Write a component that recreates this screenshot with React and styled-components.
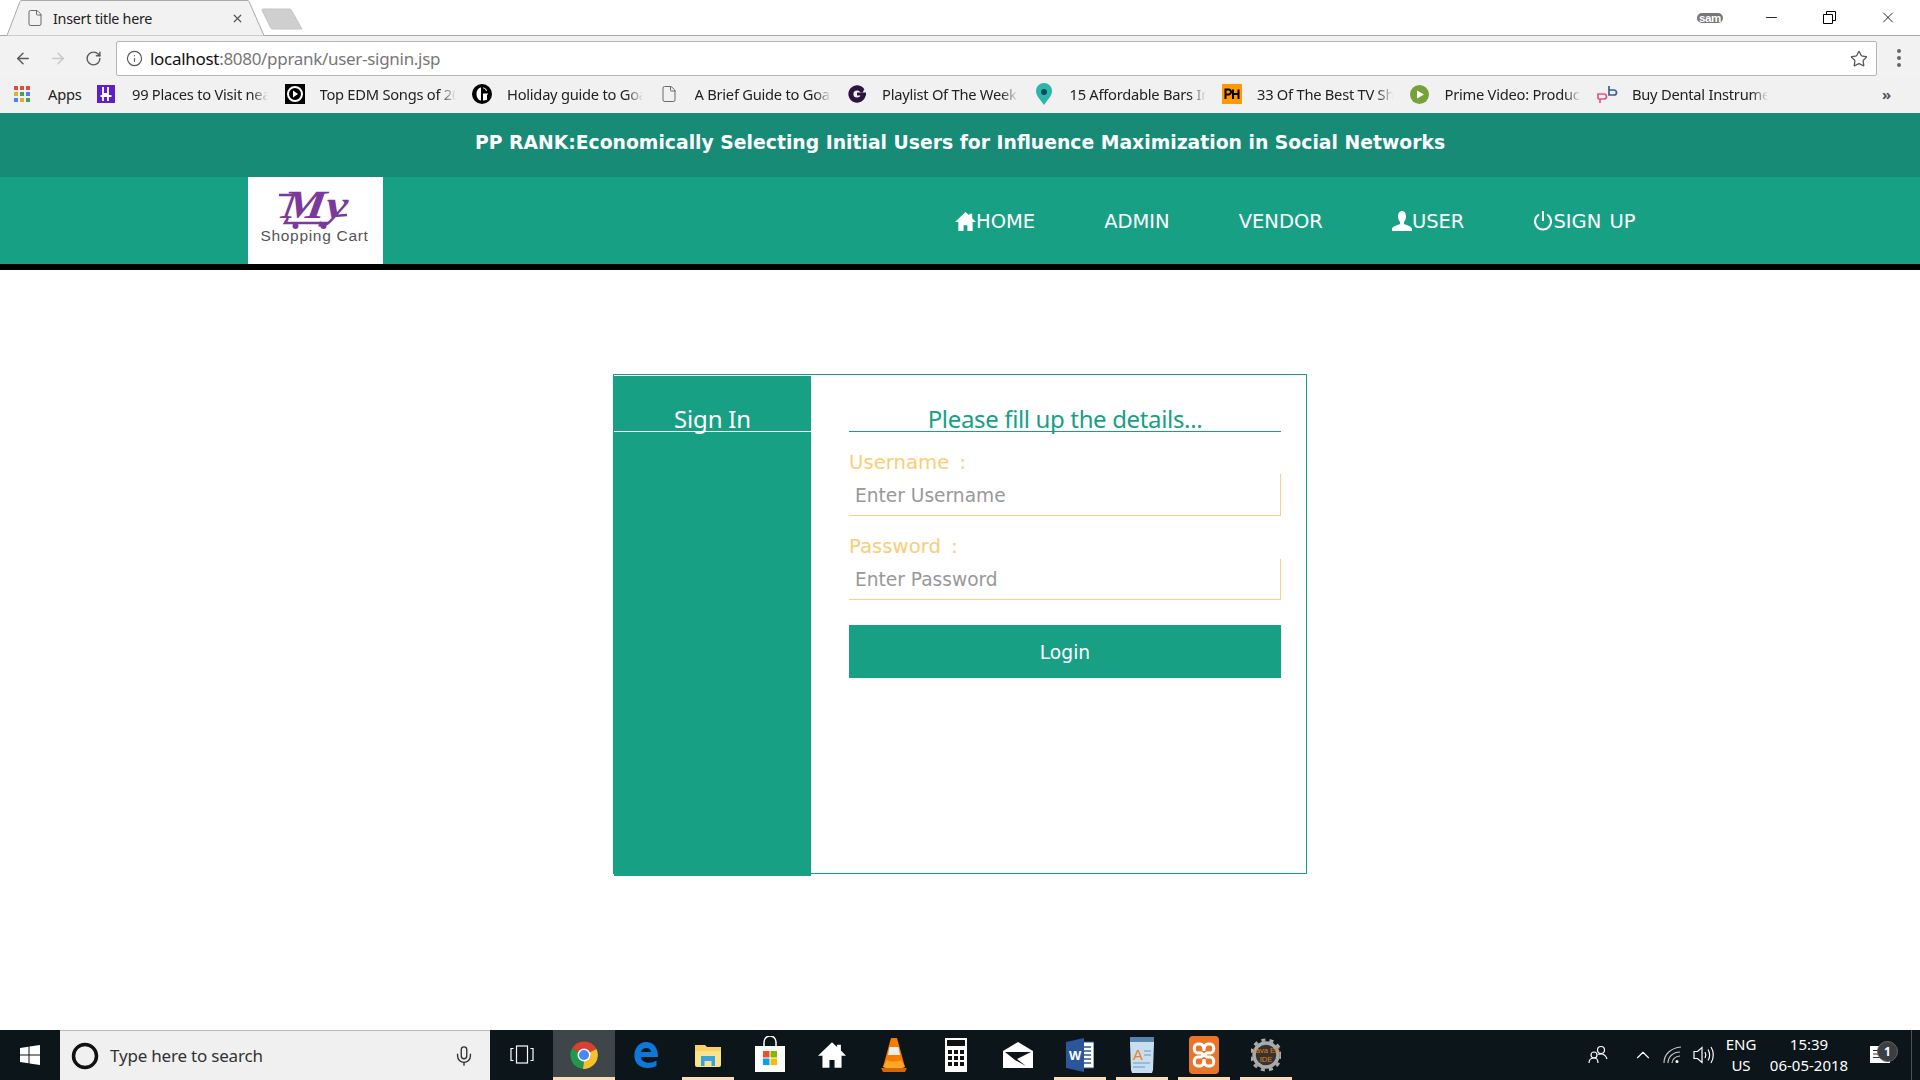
import React from 'react';
import styled, { createGlobalStyle } from 'styled-components';
import { ArrowLeft, ArrowRight, RotateCw, Info, Star, File, X, Minus, Mic, ChevronUp } from 'lucide-react';

const Global = createGlobalStyle`
  html, body { margin: 0; padding: 0; background: #fff; overflow: hidden; }
  * { box-sizing: border-box; }
  input::placeholder { color: #999; opacity: 1; }
`;
const UI = `"Noto Sans", "Open Sans", sans-serif`;
const Page = styled.div`
  width: 1920px; height: 1080px; display: flex; flex-direction: column; background: #fff;
  font-family: "DejaVu Sans", sans-serif;
`;
/* ---------- browser chrome ---------- */
const TabStrip = styled.div`
  height: 36px; display: flex; align-items: flex-end; background: #fff; border-bottom: 1px solid #a9a9a9;
  padding-left: 7px;
`;
const Tab = styled.div`
  position: relative; width: 258px; height: 36px; margin-bottom: -1px; display: flex; align-items: center;
  padding: 0 0 0 19px; font: 14.3px ${UI}; color: #222; flex: none;
  & > svg.shape { position: absolute; inset: 0; }
`;
const TabIcon = styled.span`position: relative; display: flex; color: #666; margin-right: 9px;`;
const TabTitle = styled.span`position: relative; flex: 1; letter-spacing: -0.25px;`;
const TabClose = styled.span`position: relative; display: flex; color: #555; margin-right: 21px;`;
const NewTab = styled.svg`flex: none; margin: 0 0 5px -4px;`;
const WinControls = styled.div`
  margin-left: auto; height: 35px; align-self: flex-start; display: flex; align-items: center; color: #000;
  padding-right: 23px;
`;
const SamBadge = styled.span`
  font: bold 11.5px "Liberation Sans", sans-serif; color: #fff; background: #777; border-radius: 5px; padding: 0 2px;
  line-height: 10px; letter-spacing: -0.3px; margin-right: 39px; height: 10px;
`;
const WinBtn = styled.span`display: flex; width: 18px; justify-content: center; margin-left: ${p => p.$ml}px;`;
const Toolbar = styled.div`
  height: 40px; background: #f2f2f2; display: flex; align-items: center; padding: 4px 0 0 14px;
`;
const NavIcon = styled.span`
  display: flex; width: 18px; justify-content: center; margin-right: ${p => p.$mr}px; color: ${p => p.$c || '#5a5a5a'};
`;
const Omnibox = styled.div`
  width: 1761px; height: 35px; margin-top: 1px; background: #fff; border: 1px solid #b5b5b5; border-radius: 2px;
  display: flex; align-items: center; padding: 0 8px 0 9px;
  font: 17px ${UI}; letter-spacing: -0.3px; color: #111;
`;
const Dim = styled.span`color: #777;`;
const Url = styled.span`margin-left: 7px; flex: 1; white-space: nowrap;`;
const MenuDots = styled.span`
  display: flex; flex-direction: column; gap: 3px; margin-left: 20px;
  i { width: 4px; height: 4px; border-radius: 50%; background: #666; display: block; }
`;
const Bookmarks = styled.div`
  height: 37px; background: #f1f1f1; display: flex; align-items: center; padding: 0 0 1px 14px;
  font: 14.7px ${UI}; color: #222; letter-spacing: -0.25px; position: relative;
`;
const Apps = styled.div`width: 83px; display: flex; align-items: center; gap: 18px; flex: none;`;
const Mark = styled.div`width: 187.5px; display: flex; align-items: center; flex: none;`;
const MarkIcon = styled.span`width: 35px; flex: none; display: flex;`;
const MarkText = styled.span`
  width: 136px; white-space: nowrap; overflow: hidden; flex: none;
  mask-image: linear-gradient(to right, #000 88%, transparent 100%);
`;
const More = styled.span`margin-left: auto; padding-right: 29px; color: #555; font-size: 15px; font-weight: 700;`;
/* ---------- page ---------- */
const Header = styled.header`
  height: 64px; background: #178b76; color: #fff; font: bold 18.8px "DejaVu Sans", sans-serif;
  display: flex; align-items: center; justify-content: center; padding: 0 0 5px 0; white-space: nowrap;
`;
const NavBar = styled.nav`
  height: 93px; background: #18a085; border-bottom: 6px solid #000; display: flex; align-items: stretch;
  padding-left: 248px; flex: none;
`;
const Logo = styled.div`
  width: 135px; background: #fff; display: flex; flex-direction: column; align-items: center; padding-top: 14px;
`;
const LogoText = styled.span`
  font: 15.5px "Liberation Sans", sans-serif; color: #555; letter-spacing: 0.7px; margin-top: -2px; margin-left: -2px; line-height: 17px;
`;
const Links = styled.div`display: flex; align-items: center; margin-left: 572px; gap: 69px; padding-top: 1px;`;
const NavLink = styled.a`
  display: flex; align-items: center; color: #fff; font-size: 19.5px; text-decoration: none; word-spacing: 2px;
`;
const Main = styled.main`flex: 1; padding: 104px 0 0 613px; min-height: 0;`;
const Card = styled.section`
  width: 694px; height: 500px; border: 1px solid #18a085; display: flex; align-items: flex-start;
`;
const Side = styled.aside`
  width: 197px; height: 500px; margin-top: 1px; background: #18a085; flex: none;
`;
const SideTitle = styled.h2`
  margin: 0; height: 56px; border-bottom: 1px solid #fff; color: #fff; text-align: center;
  font: 400 24px ${UI}; line-height: 28px; padding-top: 29px; letter-spacing: -0.2px; white-space: nowrap;
`;
const Form = styled.form`width: 432px; margin: 1px 0 0 38px; display: flex; flex-direction: column;`;
const FormTitle = styled.h3`
  margin: 0; height: 56px; border-bottom: 1px solid #18a085; color: #18a085; text-align: center;
  font: 400 24px ${UI}; line-height: 28px; padding-top: 29px; letter-spacing: -0.35px; white-space: nowrap;
`;
const Label = styled.label`
  display: block; height: 23px; margin-top: ${p => p.$mt}px; padding-top: ${p => p.$pt || 0}px; color: #fbcd74;
  font-size: 19.7px; line-height: 21px; word-spacing: 4px;
`;
const Input = styled.input`
  display: block; width: 100%; height: ${p => p.$h}px; border: 0; border-bottom: 1px solid #f6d284; border-right: 1px solid #f6d284;
  padding: ${p => p.$pt || 0}px 6px 0; font: 18.6px "DejaVu Sans", sans-serif; outline: none; background: #fff;
`;
const Login = styled.button`
  margin-top: 25px; height: 53px; border: 0; padding: 1px 0 0; background: #18a085; color: #fff; font: 18.7px "DejaVu Sans", sans-serif;
`;
/* ---------- taskbar ---------- */
const Taskbar = styled.footer`
  height: 50px; background: #0c1519; display: flex; align-items: stretch; color: #fff; flex: none;
`;
const Start = styled.div`width: 60px; display: flex; align-items: center; justify-content: center;`;
const Search = styled.div`
  width: 430px; background: #f0f0f0; border-top: 1px solid #bbb; display: flex; align-items: center;
  padding-left: 11px; font: 17px ${UI}; color: #333; letter-spacing: -0.2px;
`;
const SearchText = styled.span`flex: 1; margin-left: 11px;`;
const MicWrap = styled.span`display: flex; margin-right: 15px; color: #333;`;
const Slot = styled.div`
  width: ${p => p.$w || 62}px; flex: none; position: relative; display: flex; align-items: center; justify-content: center;
  background: ${p => (p.$active ? '#3e464a' : 'transparent')};
  &::after {
    content: ''; display: ${p => (p.$open ? 'block' : 'none')}; position: absolute; bottom: 0; height: 3px;
    left: ${p => (p.$active ? 0 : 5)}px; right: ${p => (p.$active ? 0 : 5)}px; background: #fcdcb6;
  }
`;
const Tray = styled.div`
  margin-left: auto; display: flex; align-items: center; padding-right: 8px; position: relative;
`;
const TrayItem = styled.div`
  width: ${p => p.$w}px; margin-left: ${p => p.$ml || 0}px; flex: none; display: flex; flex-direction: column; align-items: center;
  justify-content: center; font: 15px ${UI}; line-height: 21px; color: #fff; position: relative; white-space: nowrap;
`;
const Divider = styled.span`width: 1px; height: 50px; background: #4a5054; margin-left: 21px;`;
const Count = styled.span`
  position: absolute; right: -8px; bottom: 2px; width: 21px; height: 21px; border-radius: 50%; background: #3a3f42;
  border: 1px solid #666; font: 700 12px/19px ${UI}; text-align: center; color: #fff;
`;

/* ---------- drawings ---------- */
const AppsGrid = () => (
  <svg width="16" height="16" viewBox="0 0 16 16">
    {[['#e04b3f', '#e04b3f', '#e04b3f'], ['#f1a72c', '#38a853', '#4385f4'], ['#4385f4', '#f1a72c', '#38a853']].flatMap((row, y) =>
      row.map((c, x) => <rect key={`${x}${y}`} x={x * 6} y={y * 6} width="4" height="4" fill={c} />))}
  </svg>
);
const Hostel = () => <svg width="18" height="18" viewBox="0 0 18 18"><rect width="18" height="18" fill="#5b21c4"/><path d="M6 2v14M11 2v14M6 9h5M3.500 11h11" stroke="#fff" strokeWidth="1.800"/></svg>;
const PlayDisc = () => <svg width="20" height="20" viewBox="0 0 20 20"><rect width="20" height="20" fill="#000"/><circle cx="10" cy="10" r="7" fill="none" stroke="#fff" strokeWidth="2"/><path d="M8 6.500l5 3.500-5 3.500z" fill="#fff"/></svg>;
const Guardian = () => <svg width="20" height="20" viewBox="0 0 20 20"><circle cx="10" cy="10" r="10" fill="#000"/><path d="M9 3.500C6 4 4.500 7 4.500 10s1.500 6 4.500 6.500zM11 3.500c2 .2 3.500 1.200 4 3.500h-1c-.5-1.600-1.500-2.500-3-2.700zM11 9.500h5v1l-1 .3v5c-1 .5-2.500.7-4 .7z" fill="#fff"/></svg>;
const GLogo = () => <svg width="20" height="20" viewBox="0 0 20 20"><path d="M17.500 5.500A8.700 8.700 0 1 0 18.700 11H11V8.500h4.800l1.200-3z" fill="#2e1440"/><circle cx="10" cy="10" r="3.600" fill="#f1f1f1"/><path d="M10 8.500h9v3h-9z" fill="#2e1440"/></svg>;
const Pin = () => <svg width="18" height="22" viewBox="0 0 18 22"><path d="M9 22C5 16 1 13 1 8a8 8 0 0 1 16 0c0 5-4 8-8 14z" fill="#2db5ad"/><circle cx="9" cy="9" r="3" fill="#0d4a50"/></svg>;
const PH = () => <svg width="20" height="20" viewBox="0 0 20 20"><rect width="20" height="20" fill="#ff9900"/><path d="M3.500 15V5.500h3a2.200 2.200 0 0 1 0 5h-3M11 5.500V15M16.500 5.500V15M11 10h5.500" stroke="#000" strokeWidth="2" fill="none"/></svg>;
const PlayGreen = () => <svg width="19" height="19" viewBox="0 0 19 19"><circle cx="9.500" cy="9.500" r="9.500" fill="#76a23b"/><path d="M7 5.500l7 4-7 4z" fill="#fff"/></svg>;
const PB = () => <svg width="22" height="20" viewBox="0 0 22 20"><path d="M1 15V10h6a2.500 2.500 0 0 1 0 5H1M3 15v4" stroke="#e8518f" strokeWidth="1.700" fill="none"/><path d="M12 2v9h5a2.300 2.300 0 0 0 0-5h-5" stroke="#3a5d96" strokeWidth="1.700" fill="none"/></svg>;
const HomeIcon = ({ size = 21 }) => <svg width={size} height={size} viewBox="0 0 22 22"><path d="M11 1L0 11.500h3.500V21h5.500v-6h4v6h5.500v-9.500H22L18 7.500V3h-3v1.700z" fill="#fff"/></svg>;
const UserIcon = () => <svg width="20" height="22" viewBox="0 0 20 22"><path d="M10 1c2.800 0 4 2.500 4 5.500 0 2.500-1 4.500-2 5.500v2c2 1 8 2.500 8 5v2H0v-2c0-2.500 6-4 8-5v-2c-1-1-2-3-2-5.500C6 3.500 7.200 1 10 1z" fill="#fff"/></svg>;
const PowerIcon = () => <svg width="20" height="22" viewBox="0 0 20 22"><path d="M6 4.500a8 8 0 1 0 8 0" fill="none" stroke="#fff" strokeWidth="2"/><path d="M10 1v10" stroke="#fff" strokeWidth="2"/></svg>;
const LogoMark = () => (
  <svg width="76" height="38" viewBox="0 0 76 38">
    <text x="0" y="27" transform="skewX(-8)" dx="6" fontFamily="Liberation Serif, serif" fontWeight="700" fontStyle="italic" fontSize="40" fill="#7b3a9b" textLength="66" lengthAdjust="spacingAndGlyphs">My</text>
    <path d="M1 4h14M10 27L7 32h44M55 25l14-1" stroke="#7b3a9b" strokeWidth="2.500" fill="none"/>
    <circle cx="17.500" cy="35" r="3" fill="#7b3a9b"/><circle cx="45.500" cy="35" r="3" fill="#7b3a9b"/>
  </svg>
);
const WinLogo = () => <svg width="20" height="20" viewBox="0 0 20 20"><path d="M0 3l8.500-1.200v7.700H0zM9.500 1.600L20 0v9.500H9.500zM0 10.500h8.500v7.700L0 17zM9.500 10.500H20V20L9.500 18.400z" fill="#fff"/></svg>;
const Cortana = () => <svg width="28" height="28" viewBox="0 0 28 28"><circle cx="14" cy="14" r="11.500" fill="none" stroke="#111" strokeWidth="3.500"/></svg>;
const TaskView = () => <svg width="24" height="20" viewBox="0 0 24 20" fill="none" stroke="#fff" strokeWidth="1.200"><rect x="6.500" y="1" width="11" height="17"/><path d="M3.500 3.500H1v12h2.500M20.500 3.500H23v12h-2.500"/></svg>;
const Chrome = () => <svg width="28" height="28" viewBox="0 0 28 28"><path d="M14 14L2 7.500A14 14 0 0 1 26.500 8z" fill="#d8412f"/><path d="M14 14L26.500 8A14 14 0 0 1 13 28z" fill="#f5c22c"/><path d="M14 14L13 28A14 14 0 0 1 2 7.500z" fill="#22994a"/><circle cx="14" cy="14" r="6.500" fill="#fff"/><circle cx="14" cy="14" r="5" fill="#4a89f3"/></svg>;
const Edge = () => <svg width="26" height="28" viewBox="0 0 26 28"><path d="M25 16H8c.5 6 9 7.500 15.500 3.500V25c-8 4-21 2.500-22-9C.5 6 8 0 14 1c7 .5 11 6 11 15zM18 11c0-5.500-9-5.500-10 0z" fill="#0d78d7"/></svg>;
const Explorer = () => <svg width="28" height="26" viewBox="0 0 28 26"><path d="M1 3h10l2 2h14v18H1z" fill="#f6d364"/><path d="M1 9h26v14a2 2 0 0 1-2 2H3a2 2 0 0 1-2-2z" fill="#fbe38d"/><path d="M7 14h14v10h-3.500v-5h-7v5H7z" fill="#39a3dd"/></svg>;
const Store = () => <svg width="30" height="38" viewBox="0 0 30 38"><path d="M9 10V6a6 6 0 0 1 12 0v4" fill="none" stroke="#fff" strokeWidth="1.500"/><rect y="10" width="30" height="26" fill="#fff"/><rect x="8" y="15" width="6.500" height="6.500" fill="#f25022"/><rect x="15.500" y="15" width="6.500" height="6.500" fill="#7fba00"/><rect x="8" y="22.500" width="6.500" height="6.500" fill="#00a4ef"/><rect x="15.500" y="22.500" width="6.500" height="6.500" fill="#ffb900"/></svg>;
const Vlc = () => <svg width="26" height="36" viewBox="0 0 26 36"><path d="M10 1h6l8 29H2z" fill="#f57c00"/><path d="M8.500 10h9l1.500 8H7z" fill="#eee"/><path d="M6 23c4 2 10 2 14 0l4 7c-6 3-16 3-22 0z" fill="#ffa726"/><path d="M0 31h26l-2 4H2z" fill="#d96500"/></svg>;
const Calc = () => (
  <svg width="22" height="34" viewBox="0 0 22 34"><rect width="22" height="34" fill="#fff"/><rect x="2" y="2" width="18" height="6" fill="#111"/>
    {[12, 18, 24].flatMap(y => [3, 9, 15].map(x => <rect key={`${x}${y}`} x={x} y={y} width="4" height="4" fill="#111"/>))}
  </svg>
);
const Mail = () => <svg width="30" height="26" viewBox="0 0 30 26"><path d="M15 0L30 9v17H0V9z" fill="#fff"/><path d="M2 10h26L14 17l9 7-11-6z" fill="#0c1519"/></svg>;
const Word = () => <svg width="28" height="34" viewBox="0 0 28 34"><rect x="13" y="4" width="15" height="26" fill="#fff" stroke="#2b579a"/><path d="M16 9h9M16 13h9M16 17h9M16 21h9M16 25h9" stroke="#2b579a" strokeWidth="1.500"/><path d="M0 4L18 0v34L0 30z" fill="#2b579a"/><text x="3" y="22" fontFamily="Liberation Sans, sans-serif" fontWeight="700" fontSize="13" fill="#fff">W</text></svg>;
const Pad = () => <svg width="26" height="38" viewBox="0 0 26 38"><path d="M1 3h24v4l-1 27-1 3H3l-1-3L1 7z" fill="#c6deef"/><rect x="1" y="1" width="24" height="5" fill="#5985aa"/><path d="M15 15h7M15 19h7M4 27h17M4 31h12" stroke="#8fb0ca" strokeWidth="1.300"/><text x="4" y="24" fontFamily="Liberation Sans, sans-serif" fontSize="15" fill="#f08020">A</text></svg>;
const Xampp = () => <svg width="30" height="38" viewBox="0 0 30 38"><rect width="30" height="38" rx="4" fill="#e8762a"/><path d="M9 8h2c3 0 4 4 4 7 0-3 1-7 4-7h2c5 0 5 9 0 9h-3l-3 2-3-2H9C4 17 4 8 9 8zM9 30h2c3 0 4-4 4-7 0 3 1 7 4 7h2c5 0 5-9 0-9h-3l-3-2-3 2H9C4 21 4 30 9 30z" fill="none" stroke="#fff" strokeWidth="3"/></svg>;
const Eclipse = () => (
  <svg width="30" height="34" viewBox="0 0 30 34">
    <circle cx="15" cy="17" r="12" fill="#333" stroke="#aaa" strokeWidth="3.500"/>
    <circle cx="15" cy="17" r="15" fill="none" stroke="#aaa" strokeWidth="3" strokeDasharray="4 4.200"/>
    <text x="15" y="15" textAnchor="middle" fontFamily="Liberation Sans, sans-serif" fontSize="7.500" fill="#e8801a">Java EE</text>
    <text x="15" y="24" textAnchor="middle" fontFamily="Liberation Sans, sans-serif" fontSize="7.500" fill="#e8801a">IDE</text>
  </svg>
);
const People = () => <svg width="20" height="20" viewBox="0 0 20 20" fill="none" stroke="#fff" strokeWidth="1.200"><circle cx="13" cy="5" r="3.500"/><circle cx="6" cy="10" r="3"/><path d="M1 18c0-3 2-5 5-5s4 2 4 5M10 9c1 .5 2 0 3 0 3 0 5 2 6 5"/></svg>;
const Wifi = () => <svg width="20" height="18" viewBox="0 0 20 18" fill="none" stroke="#ccc" strokeWidth="1.100"><path d="M1 17C1 8 8 2 18 1M5 17c0-6 5-11 12-11M9 17c0-3 3-7 8-7"/><circle cx="14" cy="15.500" r="1.500" fill="#fff" stroke="none"/></svg>;
const Speaker = () => <svg width="22" height="20" viewBox="0 0 22 20" fill="none" stroke="#fff" strokeWidth="1.200"><path d="M1 6.500h3.500L9 2.500v15l-4.500-4H1zM12 7c1 1.800 1 4.200 0 6M15 4.500c2 3.300 2 7.700 0 11M18 2c3 4.500 3 11.500 0 16"/></svg>;
const Notes = () => <svg width="20" height="18" viewBox="0 0 20 18"><rect width="20" height="17" fill="#fff"/><path d="M3 4.500h14M3 8h14M3 11.500h10" stroke="#333" strokeWidth="1.200"/></svg>;

const marks = [
  [<Hostel />, '99 Places to Visit nea'],
  [<PlayDisc />, 'Top EDM Songs of 20'],
  [<Guardian />, 'Holiday guide to Goa'],
  [<File size={18} strokeWidth={1.3} color="#666" />, 'A Brief Guide to Goa'],
  [<GLogo />, 'Playlist Of The Week'],
  [<Pin />, '15 Affordable Bars In'],
  [<PH />, '33 Of The Best TV Sh'],
  [<PlayGreen />, 'Prime Video: Product'],
  [<PB />, 'Buy Dental Instrume'],
];
const apps = [
  { icon: <Chrome />, active: true, open: true },
  { icon: <Edge /> },
  { icon: <Explorer />, open: true },
  { icon: <Store /> },
  { icon: <HomeIcon size={28} /> },
  { icon: <Vlc /> },
  { icon: <Calc /> },
  { icon: <Mail /> },
  { icon: <Word />, open: true },
  { icon: <Pad />, open: true },
  { icon: <Xampp />, open: true },
  { icon: <Eclipse />, open: true },
];

export default function App() {
  return (
    <Page>
      <Global />
      <TabStrip>
        <Tab>
          <svg className="shape" width="258" height="36" viewBox="0 0 258 36">
            <path d="M0 35.500L13 1.500C13.500 .8 14 .5 15 .5H240c1 0 1.500.3 2 1L257 35.500" fill="#f2f2f2" stroke="#a9a9a9" />
          </svg>
          <TabIcon><File size={18} strokeWidth={1.3} /></TabIcon>
          <TabTitle>Insert title here</TabTitle>
          <TabClose><X size={13} strokeWidth={2.2} /></TabClose>
        </Tab>
        <NewTab width="42" height="22" viewBox="0 0 42 22"><path d="M2 1h26c1 0 2 .5 2.500 1.500L41 21H12c-1 0-2-.5-2.500-1.500L1 2c-.3-.6.300-1 1-1z" fill="#cfcfcf" stroke="#c4c4c4" /></NewTab>
        <WinControls>
          <SamBadge>sam</SamBadge>
          <WinBtn $ml={0}><Minus size={17} strokeWidth={1.2} /></WinBtn>
          <WinBtn $ml={40}>
            <svg width="13" height="13" viewBox="0 0 13 13" fill="none" stroke="#000"><path d="M.5 3.500h9v9h-9zM3.500 3V.5h9v9H10" /></svg>
          </WinBtn>
          <WinBtn $ml={41}><X size={19} strokeWidth={1.1} /></WinBtn>
        </WinControls>
      </TabStrip>
      <Toolbar>
        <NavIcon $mr={17}><ArrowLeft size={19} strokeWidth={2} /></NavIcon>
        <NavIcon $mr={17} $c="#c8c8c8"><ArrowRight size={19} strokeWidth={2} /></NavIcon>
        <NavIcon $mr={14}><RotateCw size={17} strokeWidth={2} /></NavIcon>
        <Omnibox>
          <Info size={17} strokeWidth={1.6} color="#555" />
          <Url>localhost<Dim>:8080/pprank/user-signin.jsp</Dim></Url>
          <Star size={18} strokeWidth={1.7} color="#555" />
        </Omnibox>
        <MenuDots><i /><i /><i /></MenuDots>
      </Toolbar>
      <Bookmarks>
        <Apps><AppsGrid /><span>Apps</span></Apps>
        {marks.map(([icon, text]) => (
          <Mark key={text}><MarkIcon>{icon}</MarkIcon><MarkText>{text}</MarkText></Mark>
        ))}
        <More>»</More>
      </Bookmarks>
      <Header>PP RANK:Economically Selecting Initial Users for Influence Maximization in Social Networks</Header>
      <NavBar>
        <Logo><LogoMark /><LogoText>Shopping Cart</LogoText></Logo>
        <Links>
          <NavLink href="#"><HomeIcon />HOME</NavLink>
          <NavLink href="#">ADMIN</NavLink>
          <NavLink href="#">VENDOR</NavLink>
          <NavLink href="#"><UserIcon />USER</NavLink>
          <NavLink href="#"><PowerIcon />SIGN UP</NavLink>
        </Links>
      </NavBar>
      <Main>
        <Card>
          <Side><SideTitle>Sign In</SideTitle></Side>
          <Form onSubmit={e => e.preventDefault()}>
            <FormTitle>Please fill up the details...</FormTitle>
            <Label $mt={19} $pt={1}>Username :</Label>
            <Input $h={42} $pt={1} placeholder="Enter Username" />
            <Label $mt={20}>Password :</Label>
            <Input $h={41} type="password" placeholder="Enter Password" />
            <Login type="button">Login</Login>
          </Form>
        </Card>
      </Main>
      <Taskbar>
        <Start><WinLogo /></Start>
        <Search>
          <Cortana />
          <SearchText>Type here to search</SearchText>
          <MicWrap><Mic size={22} strokeWidth={1.5} /></MicWrap>
        </Search>
        <Slot $w={63}><TaskView /></Slot>
        {apps.map((a, i) => <Slot key={i} $active={a.active} $open={a.open}>{a.icon}</Slot>)}
        <Tray>
          <TrayItem $w={20}><People /></TrayItem>
          <TrayItem $w={20} $ml={25}><ChevronUp size={22} strokeWidth={1.2} /></TrayItem>
          <TrayItem $w={20} $ml={10}><Wifi /></TrayItem>
          <TrayItem $w={22} $ml={10}><Speaker /></TrayItem>
          <TrayItem $w={38} $ml={7}><span>ENG</span><span>US</span></TrayItem>
          <TrayItem $w={80} $ml={9}><span>15:39</span><span>06-05-2018</span></TrayItem>
          <TrayItem $w={20} $ml={21}><Notes /><Count>1</Count></TrayItem>
          <Divider />
        </Tray>
      </Taskbar>
    </Page>
  );
}
